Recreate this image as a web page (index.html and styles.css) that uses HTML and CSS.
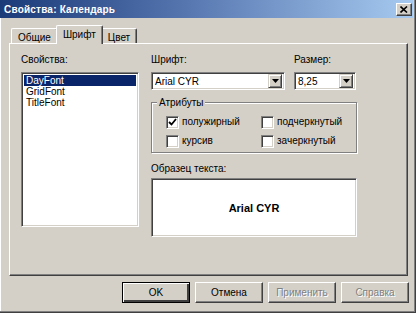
FILE: index.html
```html
<!DOCTYPE html>
<html lang="ru">
<head>
  <meta charset="UTF-8">
  <title>Свойства: Календарь</title>
  <link rel="stylesheet" href="styles.css">
</head>
<body>
<div class="window">
  <div class="titleBar">
    <span class="titleText">Свойства: Календарь</span>
    <span class="closeBtn">
      <svg width="8" height="7" viewBox="0 0 8 7"><path d="M0.5 0.5 L7 6.5 M7 0.5 L0.5 6.5" stroke="#000" stroke-width="1.6"/></svg>
    </span>
  </div>

  <ul class="tabList">
    <li class="tab">Общие</li>
    <li class="tab tab-active">Шрифт</li>
    <li class="tab">Цвет</li>
  </ul>

  <div class="tabPanel">
    <div class="leftCol">
      <p class="label">Свойства:</p>
      <ul class="listBox">
        <li class="listItem listItem-selected">DayFont</li>
        <li class="listItem">GridFont</li>
        <li class="listItem">TitleFont</li>
      </ul>
    </div>

    <div class="rightCol">
      <div class="comboRow">
        <div class="fontField">
          <p class="label">Шрифт:</p>
          <div class="combo">
            <span class="comboText">Arial CYR</span>
            <span class="comboBtn"><svg width="7" height="4" viewBox="0 0 7 4"><path d="M0 0 H7 L3.5 4 Z" fill="#000"/></svg></span>
          </div>
        </div>
        <div class="sizeField">
          <p class="label">Размер:</p>
          <div class="combo">
            <span class="comboText">8,25</span>
            <span class="comboBtn"><svg width="7" height="4" viewBox="0 0 7 4"><path d="M0 0 H7 L3.5 4 Z" fill="#000"/></svg></span>
          </div>
        </div>
      </div>

      <div class="group">
        <span class="groupTitle">Атрибуты</span>
        <div class="checkGrid">
          <label class="check"><span class="checkBox"><svg width="9" height="9" viewBox="0 0 9 9"><path d="M1 4 L3.5 6.5 L8 1" stroke="#000" stroke-width="1.8" fill="none"/></svg></span>полужирный</label>
          <label class="check"><span class="checkBox"></span>подчеркнутый</label>
          <label class="check"><span class="checkBox"></span>курсив</label>
          <label class="check"><span class="checkBox"></span>зачеркнутый</label>
        </div>
      </div>

      <p class="label sampleLabel">Образец текста:</p>
      <div class="sampleBox">Arial CYR</div>
    </div>
  </div>

  <div class="buttonRow">
    <span class="button button-default">OK</span>
    <span class="button">Отмена</span>
    <span class="button button-disabled">Применить</span>
    <span class="button button-disabled">Справка</span>
  </div>
</div>
</body>
</html>
```

FILE: styles.css
```css
body, div, ul, li, p, span, label {margin:0; padding:0;}
ul {list-style:none;}
body {background:#d4d0c8; font-family:"Liberation Sans", Arial, sans-serif; font-size:10px; color:#000;}

.window {width:416px; height:313px; box-sizing:border-box; background:#d4d0c8; padding:0 2px 2px 0;
         border-right:1px solid #404040; border-bottom:1px solid #404040;
         box-shadow:inset -1px -1px 0 #808080, inset 1px 0 0 #fff;}

.titleBar {display:flex; align-items:center; justify-content:space-between; height:18px; padding-left:4px;
           background:linear-gradient(to right, #1a3a78 0%, #5676b0 45%, #a6caf0 100%);}
.titleText {color:#fff; font-weight:bold; font-size:10px; letter-spacing:0.2px;}
.closeBtn {display:flex; align-items:center; justify-content:center; width:16px; height:13px; margin-right:1px;
           box-sizing:border-box; background:#d4d0c8; border:1px solid; border-color:#fff #404040 #404040 #fff;
           box-shadow:inset -1px -1px 0 #808080;}

.tabList {display:flex; align-items:flex-end; height:18px; margin-top:7px; padding-left:11px;}
.tab {height:15px; box-sizing:border-box; padding:2px 6px 0; line-height:13px; background:#d4d0c8;
      border:1px solid; border-bottom:0; border-color:#fff #404040 #404040 #fff; border-radius:2px 2px 0 0;
      box-shadow:inset -1px 0 0 #808080;}
.tab-active {position:relative; z-index:1; height:19px; margin:0 -2px -1px; padding:2px 6px 0;}

.tabPanel {display:flex; width:399px; height:233px; margin-left:9px; box-sizing:border-box; padding:9px 0 0 11px;
           border:1px solid; border-color:#fff #404040 #404040 #fff; box-shadow:inset -1px -1px 0 #808080;}

.label {line-height:13px; margin-bottom:6px;}

.leftCol {width:118px;}
.listBox {height:155px; box-sizing:border-box; padding:2px; background:#fff;
          border:1px solid; border-color:#808080 #fff #fff #808080;
          box-shadow:inset 1px 1px 0 #404040, inset -1px -1px 0 #d4d0c8;}
.listItem {height:11px; line-height:11px; padding-left:2px;}
.listItem-selected {background:#0a246a; color:#fff;}

.rightCol {width:206px; margin-left:12px;}
.comboRow {display:flex; gap:9px;}
.fontField {width:134px;}
.sizeField {width:62px;}
.combo {display:flex; align-items:center; justify-content:space-between; height:18px; box-sizing:border-box;
        padding:2px; background:#fff; border:1px solid; border-color:#808080 #fff #fff #808080;
        box-shadow:inset 1px 1px 0 #404040, inset -1px -1px 0 #d4d0c8;}
.comboText {padding-left:1px; line-height:13px;}
.comboBtn {display:flex; align-items:center; justify-content:center; width:14px; height:14px; box-sizing:border-box;
           background:#d4d0c8; border:1px solid; border-color:#d4d0c8 #404040 #404040 #d4d0c8;
           box-shadow:inset 1px 1px 0 #fff, inset -1px -1px 0 #808080;}

.group {margin-top:12px; height:51px; box-sizing:border-box; padding:0 0 0 14px;
        border:1px solid #808080; box-shadow:1px 1px 0 #fff, inset 1px 1px 0 #fff;}
.groupTitle {display:table; margin:-7px 0 0 -9px; padding:0 2px; line-height:13px; background:#d4d0c8;}
.checkGrid {display:grid; grid-template-columns:95px auto; row-gap:5px; margin-top:6px;}
.check {display:flex; align-items:center; gap:3px; height:14px; line-height:14px;}
.checkBox {display:flex; align-items:center; justify-content:center; width:13px; height:13px; box-sizing:border-box;
           background:#fff; border:1px solid; border-color:#808080 #fff #fff #808080;
           box-shadow:inset 1px 1px 0 #404040, inset -1px -1px 0 #d4d0c8;}

.sampleLabel {margin:9px 0 3px;}
.sampleBox {display:flex; align-items:center; justify-content:center; height:59px; box-sizing:border-box;
            background:#fff; font-size:11px; font-weight:bold; border:1px solid; border-color:#808080 #fff #fff #808080;
            box-shadow:inset 1px 1px 0 #404040, inset -1px -1px 0 #d4d0c8;}

.buttonRow {display:flex; justify-content:flex-end; gap:5px; margin-top:6px; padding-right:4px;}
.button {display:flex; align-items:center; justify-content:center; width:68px; height:21px; box-sizing:border-box;
         background:#d4d0c8; border:1px solid; border-color:#fff #404040 #404040 #fff;
         box-shadow:inset -1px -1px 0 #808080;}
.button-default {border:1px solid #000; box-shadow:inset 1px 1px 0 #fff, inset -2px -2px 0 #404040, inset -1px -1px 0 #808080;}
.button-disabled {color:#808080; text-shadow:1px 1px 0 #fff;}
```
